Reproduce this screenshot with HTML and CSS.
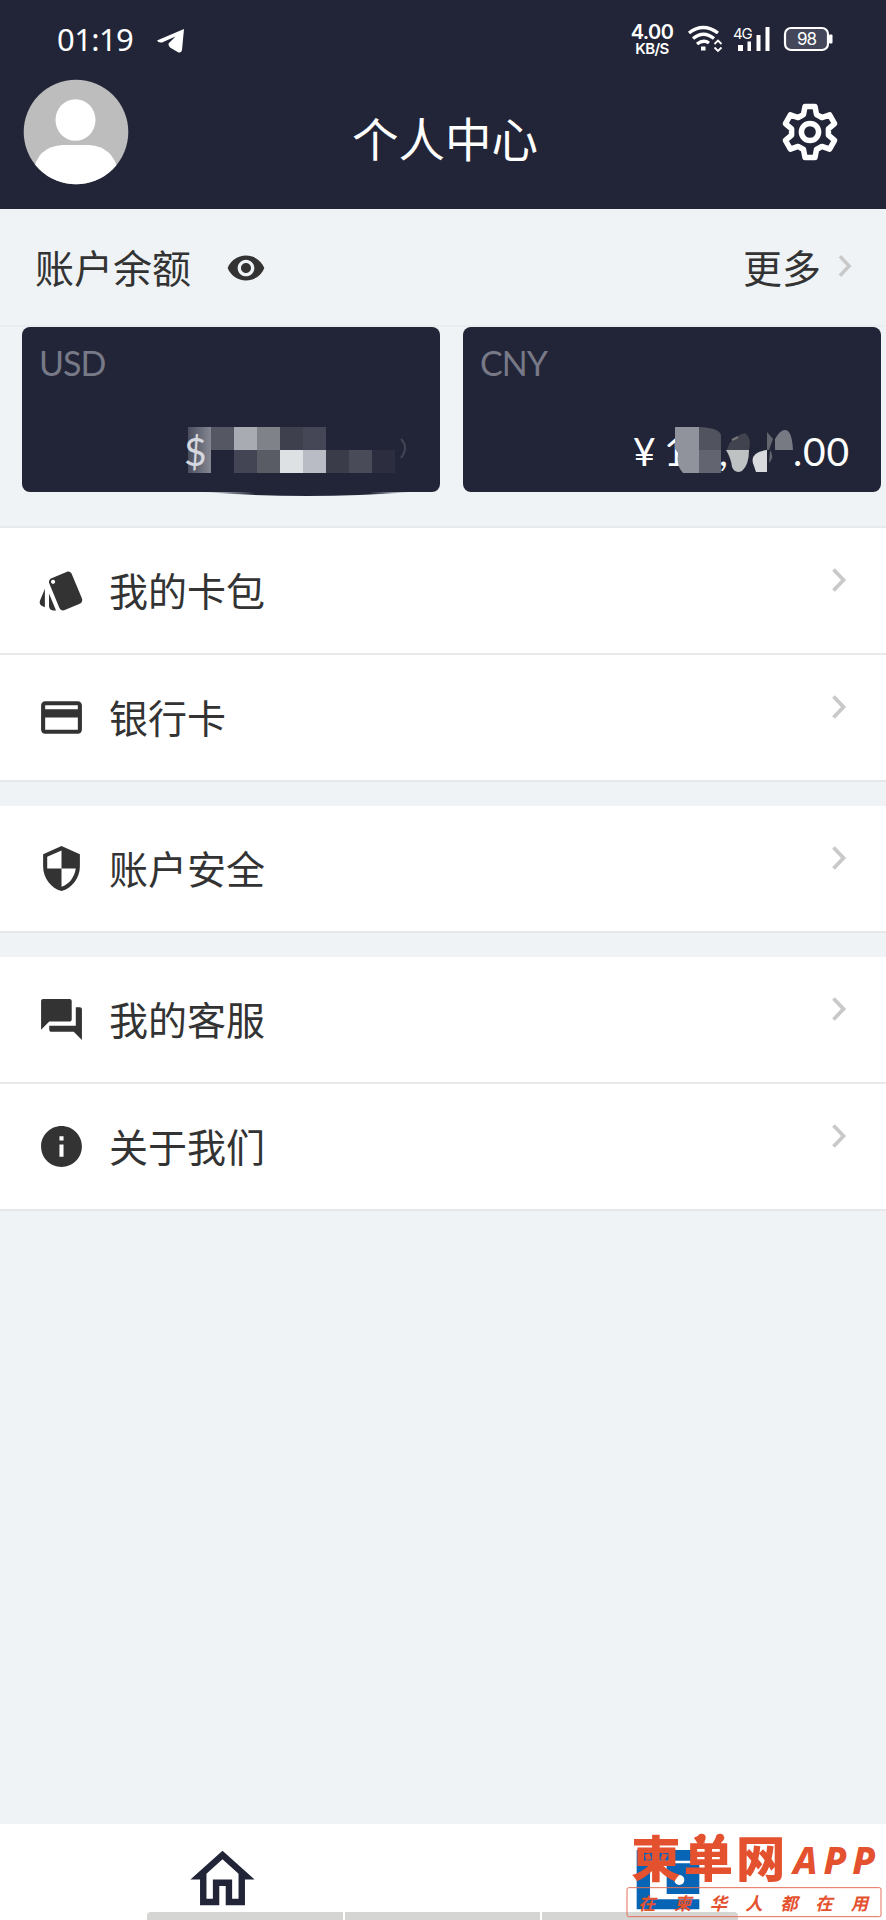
FILE: index.html
```html
<!DOCTYPE html>
<html lang="zh-CN">
<head>
<meta charset="utf-8">
<title>个人中心</title>
<link rel="stylesheet" href="styles.css">
</head>
<body>
<svg class="defs" width="0" height="0">
  <symbol id="chevron" viewBox="0 0 16 26"><path d="M2.500 2.500 12.500 13 2.500 23.500" fill="none" stroke="#c9c9c9" stroke-width="3.800"/></symbol>
</svg>
<div class="screen">
  <header class="header">
    <div class="status">
      <span class="clock">01:19</span>
      <svg class="plane" width="28" height="24" viewBox="0 0 28 24"><path d="M27 0 0 11.500Q1 14 5 13.500L18.500 7.500 11.500 14.500Q11 16 13 18.500L21.500 23.500Q24.500 24 25 21Z" fill="#fff"/></svg>
      <div class="speed"><b class="rate">4.00</b><b class="unit">KB/S</b></div>
      <svg class="signals" width="148" height="30" viewBox="0 0 148 30" fill="none" stroke="#fff">
        <path d="M2 9Q16 -2 31 9M6 14.500Q16.500 6 27 14.500M10 20Q16.500 15 22 19" stroke-width="3.400"/>
        <rect x="14" y="22.500" width="4.500" height="4" fill="#fff" stroke="none"/>
        <path d="M27.500 20 31 16.500 34.500 20M27.500 23.500 31 27 34.500 23.500" stroke-width="1.800"/>
        <text x="46" y="15" class="net">4G</text>
        <g fill="#fff" stroke="none"><rect x="51" y="21" width="5" height="6"/><rect x="60.500" y="17.500" width="3.500" height="9.500"/><rect x="69.500" y="11" width="4" height="16"/><rect x="78.500" y="3" width="4" height="24"/></g>
        <rect x="98" y="4" width="43" height="22" rx="6" fill="#44475a" stroke-width="2.200"/>
        <rect x="142" y="10.500" width="3.500" height="9" rx="1" fill="#fff" stroke="none"/>
        <text x="110" y="21" class="charge">98</text>
      </svg>
    </div>
    <div class="titlebar">
      <svg class="avatar" width="106" height="106" viewBox="0 0 106 106">
        <clipPath id="round"><circle cx="53" cy="53" r="52.300"/></clipPath>
        <g clip-path="url(#round)"><path d="M0 0H106V106H0Z" fill="#bdbdbd"/><ellipse cx="52.500" cy="41" rx="20" ry="20.800" fill="#fff"/><path d="M10 106V94Q14 67 40 66H66Q90 67 96 94V106Z" fill="#fff"/></g>
      </svg>
      <h1 class="title">个人中心</h1>
      <svg class="gear" width="58" height="60" viewBox="-29 -30 58 60" fill="none" stroke="#fff" stroke-width="5.500" stroke-linejoin="round">
        <path d="M-5-25.500H5L6.500-17.500 11.900-14.400 19.600-17.100 24.600-8.400 18.400-3.100V3.100L24.600 8.400 19.600 17.100 11.900 14.400 6.500 17.500 5 25.500H-5L-6.500 17.500-11.900 14.400-19.600 17.100-24.600 8.400-18.400 3.100V-3.100L-24.600-8.400-19.600-17.100-11.900-14.400-6.500-17.500Z"/>
        <circle r="8.600"/>
      </svg>
    </div>
  </header>

  <section class="balance">
    <div class="balance-head">
      <span>账户余额</span>
      <svg class="eye" width="40" height="40" viewBox="0 0 24 24" fill="#333"><path d="M12 4.500C7 4.500 2.730 7.610 1 12c1.730 4.390 6 7.500 11 7.500s9.270-3.110 11-7.500c-1.730-4.390-6-7.500-11-7.500zM12 17c-2.760 0-5-2.240-5-5s2.240-5 5-5 5 2.240 5 5-2.240 5-5 5zm0-8c-1.660 0-3 1.340-3 3s1.340 3 3 3 3-1.340 3-3-1.340-3-3-3z"/></svg>
      <span class="more">更多</span>
      <svg class="more-arrow" width="16" height="24"><use href="#chevron"/></svg>
    </div>
    <div class="cards">
      <div class="card">
        <span class="currency">USD</span>
        <svg class="amount" width="418" height="172" viewBox="0 0 418 172">
          <defs>
            <linearGradient id="fade"><stop offset="0" stop-color="#222537" stop-opacity="0"/><stop offset=".25" stop-color="#222537"/><stop offset=".8" stop-color="#222537"/><stop offset="1" stop-color="#222537" stop-opacity="0"/></linearGradient>
            <linearGradient id="glow"><stop offset="0" stop-color="#4a4d5d"/><stop offset="1" stop-color="#858792"/></linearGradient>
          </defs>
          <path d="M180 165Q285 173 390 165Z" fill="url(#fade)"/>
          <rect x="166" y="100" width="23" height="46" fill="url(#glow)"/>
          <text x="162" y="139" class="money dim">$</text>
          <path d="M189 100h23v23h-23z" fill="#555762"/><path d="M212 100h23v23h-23z" fill="#a9abb3"/><path d="M235 100h23v23h-23z" fill="#808289"/><path d="M258 100h23v23h-23z" fill="#3f404e"/><path d="M281 100h23v23h-23z" fill="#464756"/>
          <path d="M212 123h23v23h-23z" fill="#434555"/><path d="M235 123h23v23h-23z" fill="#595b65"/><path d="M258 123h23v23h-23z" fill="#dee1e3"/><path d="M281 123h23v23h-23z" fill="#b9bcc5"/><path d="M304 123h23v23h-23z" fill="#3b3c4a"/><path d="M327 123h23v23h-23z" fill="#4a4b59"/><path d="M350 123h23v23h-23z" fill="#2c2e3f"/>
          <path d="M379 112Q387 120 379 131" fill="none" stroke="#424554" stroke-width="2"/>
        </svg>
      </div>
      <div class="card">
        <span class="currency">CNY</span>
        <svg class="amount" width="418" height="172" viewBox="0 0 418 172">
          <text x="170" y="139" class="money">¥</text><text x="201" y="139" class="money">1</text>
          <path d="M212 100h24v46h-16q-7-7-5-20l-3-4z" fill="#91939c"/>
          <path d="M236 100q22 1 22 9v14h-22z" fill="#51535f"/><path d="M236 123h22v23h-22z" fill="#62646f"/>
          <text x="256" y="139" class="money">,</text>
          <path d="M264 123q2-12 18-17 7 5 4 17z" fill="#41434f"/><path d="M269 113 275 110" stroke="#777" stroke-width="2"/>
          <path d="M263 123h23q0 15-7 21-7 3-10-4-1-9-6-17z" fill="#bfc2c3"/>
          <path d="M303 123q-18 3-12 16l2 6h11v-22z" fill="#d8dadd"/>
          <path d="M304 105 310 112 306 123h-2zM307 123q5 7-1 13z" fill="#62646e"/>
          <path d="M312 123V112q5-9 10-9 7 0 8 20z" fill="#777983"/>
          <text x="330" y="139" class="money" textLength="56">.00</text>
        </svg>
      </div>
    </div>
  </section>

  <nav class="group">
    <a class="row"><svg class="icon" viewBox="0 0 24 24"><path d="M2.530 19.650l1.340.56v-9.030l-2.430 5.860c-.41 1.020.08 2.190 1.090 2.610zm19.500-3.700L17.070 3.980c-.31-.75-1.040-1.210-1.810-1.230-.26 0-.53.04-.79.15L7.100 5.950c-.75.31-1.210 1.030-1.230 1.800-.01.27.04.54.15.8l4.960 11.970c.31.76 1.050 1.220 1.830 1.230.26 0 .52-.05.77-.15l7.360-3.050c1.020-.42 1.510-1.590 1.090-2.600zM7.880 8.750c-.55 0-1-.45-1-1s.45-1 1-1 1 .45 1 1-.45 1-1 1zm-2 11c0 1.100.9 2 2 2h1.450l-3.450-8.340v6.340z"/></svg><span>我的卡包</span><svg class="arrow"><use href="#chevron"/></svg></a>
    <a class="row"><svg class="icon" viewBox="0 0 24 24"><path d="M20 4H4c-1.110 0-1.990.89-1.990 2L2 18c0 1.110.89 2 2 2h16c1.110 0 2-.89 2-2V6c0-1.110-.89-2-2-2zm0 14H4v-6h16v6zm0-10H4V6h16v2z"/></svg><span>银行卡</span><svg class="arrow"><use href="#chevron"/></svg></a>
  </nav>
  <nav class="group">
    <a class="row"><svg class="icon" viewBox="0 0 24 24"><path d="M12 1L3 5v6c0 5.550 3.840 10.740 9 12 5.160-1.260 9-6.450 9-12V5l-9-4zm0 10.990h7c-.53 4.120-3.280 7.790-7 8.940V12H5V6.300l7-3.110v8.800z"/></svg><span>账户安全</span><svg class="arrow"><use href="#chevron"/></svg></a>
  </nav>
  <nav class="group">
    <a class="row"><svg class="icon" viewBox="0 0 24 24"><path d="M21 6h-2v9H6v2c0 .55.45 1 1 1h11l4 4V7c0-.55-.45-1-1-1zm-4 6V3c0-.55-.45-1-1-1H3c-.55 0-1 .45-1 1v14l4-4h10c.55 0 1-.45 1-1z"/></svg><span>我的客服</span><svg class="arrow"><use href="#chevron"/></svg></a>
    <a class="row"><svg class="icon" viewBox="0 0 24 24"><path d="M12 2C6.480 2 2 6.480 2 12s4.480 10 10 10 10-4.480 10-10S17.520 2 12 2zm1 15h-2v-6h2v6zm0-8h-2V7h2v2z"/></svg><span>关于我们</span><svg class="arrow"><use href="#chevron"/></svg></a>
  </nav>

  <footer class="tabs">
    <svg class="home" width="77" height="77" viewBox="0 0 24 24" fill="#222537"><path d="M12 5.690l5 4.500V18h-2v-6H9v6H7v-7.810l5-4.500M12 3L2 12h3v8h6v-6h2v6h6v-8h3L12 3z"/></svg>
    <div class="gesture"><i></i><i></i><i></i></div>
    <svg class="brand" width="286" height="96" viewBox="0 72 858 288">
      <path d="M110 150H285V182H150V298H298V328H110Z" fill="#0864b4"/>
      <path d="M200 190H298V282H200Z" fill="#0864b4"/><circle cx="238" cy="240" r="15" fill="#fff"/>
      <g fill="#e4512f">
        <text class="logo" x="94" y="231" textLength="462">柬单网</text>
        <circle cx="305" cy="113" r="12"/><circle cx="360" cy="113" r="12"/>
        <text class="app" x="580" y="222" textLength="246">APP</text>
        <text class="slogan" y="329" x="115 222 329 436 541 646 752">在柬华人都在用</text>
      </g>
      <rect x="81" y="263" width="762" height="87" rx="5" fill="none" stroke="#e4705a" stroke-width="3"/>
    </svg>
  </footer>
</div>
</body>
</html>
```
FILE: styles.css
```css
* { box-sizing: border-box; }
body { margin: 0; background: #eff3f6; }
.defs { position: absolute; }
.screen {
  width: 886px; height: 1920px; overflow: hidden;
  display: flex; flex-direction: column;
  font-family: Lato, "Noto Sans CJK SC", sans-serif;
  font-size: 39px; color: #333; background: #eff3f6;
}
.header { height: 209px; flex: none; background: #222537; color: #fff; }
.status { height: 79px; display: flex; align-items: flex-start; padding: 0 51px 0 57px; }
.clock { width: 100px; padding-top: 19px; font: 31px/40px "Noto Sans", sans-serif; letter-spacing: -.6px; }
.plane { margin-top: 29px; }
.speed { margin-left: auto; padding-top: 24px; width: 44px; display: flex; flex-direction: column; align-items: center; font-family: Inter, sans-serif; }
.rate { font-size: 20px; line-height: 17px; font-weight: 600; letter-spacing: -.6px; }
.unit { font-size: 15px; line-height: 15px; font-weight: 600; letter-spacing: -.6px; }
.signals { margin: 24px 0 0 13px; }
.net { font: 15px Inter, sans-serif; fill: #fff; stroke: none; letter-spacing: -1.2px; }
.charge { font: 17px Inter, sans-serif; fill: #fff; stroke: none; letter-spacing: -1px; }
.titlebar { display: flex; align-items: flex-start; padding: 0 47px 0 23px; }
.avatar { flex: none; }
.title { flex: 1; margin: 20px 0 0; padding-left: 223px; font-size: 46.500px; line-height: 80px; font-weight: 400; height: 80px; }
.gear { margin-top: 23px; }

.balance { height: 319px; flex: none; border-bottom: 2px solid #e7e9eb; }
.balance-head { height: 118px; display: flex; align-items: center; padding: 1px 33px 0 35px; border-bottom: 2px solid #eaedef; line-height: 60px; }
.eye { margin-left: 35px; }
.more { margin-left: auto; }
.more-arrow { margin: -4px 0 0 16px; }
.cards { display: flex; gap: 23px; padding-left: 22px; }
.card { position: relative; width: 418px; height: 165px; flex: none; border-radius: 8px; background: #222537; padding: 15px 17px; }
.currency { display: block; font-size: 34px; line-height: 42px; color: #777987; letter-spacing: -1px; }
.amount { position: absolute; left: 0; top: 0; }
.money { font-size: 39px; fill: #fff; }
.dim { fill: #d5d7de; }

.group { background: #fff; border-bottom: 2px solid #e5e7e9; margin-bottom: 24px; flex: none; }
.row { height: 125px; display: flex; align-items: center; padding: 0 39px 0 37px; }
.row + .row { height: 127px; border-top: 2px solid #e9e9e9; }
.row span { margin: 0 0 0 23px; line-height: 60px; }
.icon { width: 49px; height: 49px; fill: #333; }
.arrow { width: 16px; height: 26px; margin: -21px 0 0 auto; }

.tabs { position: relative; height: 96px; flex: none; margin-top: auto; background: #fff; display: flex; padding-left: 184px; }
.home { margin-top: 17px; }
.gesture { position: absolute; left: 147px; bottom: 0; width: 591px; height: 8px; display: flex; gap: 2px; border-radius: 4px 4px 0 0; overflow: hidden; }
.gesture i { flex: 1; background: #d5d5d3; }
.brand { position: absolute; right: 0; top: 0; overflow: visible; }
.logo { font: 900 148px "Noto Sans CJK SC", sans-serif; }
.app { font: italic 800 112px "Noto Sans", sans-serif; }
.slogan { font: italic 700 52px "Noto Sans CJK SC", sans-serif; }
```
